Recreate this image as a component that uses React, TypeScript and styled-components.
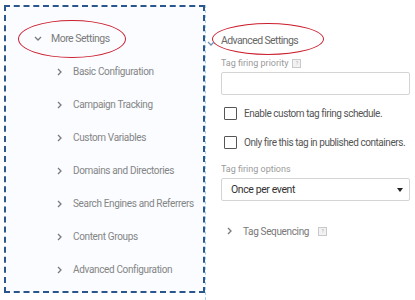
import React from 'react';
import styled, { createGlobalStyle } from 'styled-components';

const GlobalStyle = createGlobalStyle`
  html, body {
    margin: 0;
    padding: 0;
    background: #ffffff;
    font-family: Roboto, "Liberation Sans", Arial, sans-serif;
  }
`;

const moreSettings = [
  'Basic Configuration',
  'Campaign Tracking',
  'Custom Variables',
  'Domains and Directories',
  'Search Engines and Referrers',
  'Content Groups',
  'Advanced Configuration',
];

const Page = styled.div`
  display: flex;
  width: 415px;
  height: 300px;
  padding: 5px 0 0 4px;
  box-sizing: border-box;
  overflow: hidden;
  white-space: nowrap;
`;

const LeftPanel = styled.div`
  flex: none;
  width: 201px;
  height: 288px;
  box-sizing: border-box;
  border: 2px dashed #2c578c;
  background: #fafcff;
  padding-top: 15px;
  display: flex;
  flex-direction: column;
`;

const Row = styled.div<{ indent: number }>`
  position: relative;
  height: 33px;
  display: flex;
  align-items: center;
  padding-left: ${p => p.indent}px;
`;

const Chevron = styled.span`
  flex: none;
  width: 16px;
  display: flex;
  align-items: center;
  color: #7a7a7a;
  svg {
    display: block;
  }
`;

const HeaderText = styled.span`
  font-size: 10.5px;
  letter-spacing: -0.5px;
  color: #7b7b7b;
  margin-left: 1px;
`;

const ItemText = styled.span`
  font-size: 10px;
  letter-spacing: -0.35px;
  color: #858585;
`;

const Ellipse = styled.div<{ left: number; top: number; w: number; h: number }>`
  position: absolute;
  left: ${p => p.left}px;
  top: ${p => p.top}px;
  width: ${p => p.w}px;
  height: ${p => p.h}px;
  border: 1.6px solid #cc1f2d;
  border-radius: 50%;
  box-sizing: border-box;
  pointer-events: none;
`;

const RightPanel = styled.div`
  flex: none;
  width: 210px;
  box-sizing: border-box;
  border-left: 1px dashed #a9d3ee;
  padding: 20px 5px 0 15px;
  display: flex;
  flex-direction: column;
`;

const SectionHead = styled.div`
  position: relative;
  height: 30px;
  display: flex;
  align-items: center;
  font-size: 10.5px;
  letter-spacing: -0.6px;
  color: #676767;
`;

const HeadChevron = styled.span`
  position: absolute;
  left: -14px;
  top: 11px;
  color: #6f8fb0;
`;

const Label = styled.div<{ top: number }>`
  display: flex;
  align-items: center;
  gap: 4px;
  font-size: 9px;
  color: #9a9a9a;
  height: 14px;
  margin-top: ${p => p.top}px;
`;

const Help = styled.span<{ gap?: number }>`
  display: inline-flex;
  align-items: center;
  justify-content: center;
  width: 7px;
  height: 7px;
  margin-left: ${p => p.gap ?? 0}px;
  border: 1px solid #c9c9c9;
  background: #f2f2f2;
  font-size: 5px;
  color: #aaa;
  line-height: 1;
  letter-spacing: 0;
`;

const Field = styled.div`
  height: 23px;
  box-sizing: border-box;
  border: 1px solid #d4d4d4;
  border-radius: 2px;
  margin-top: 2px;
  display: flex;
  align-items: center;
  justify-content: space-between;
  padding: 0 6px 0 9px;
  font-size: 10.5px;
  letter-spacing: -0.4px;
  color: #333;
`;

const CheckList = styled.div`
  display: flex;
  flex-direction: column;
  padding-top: 4px;
`;

const CheckRow = styled.label`
  display: flex;
  align-items: center;
  height: 29px;
  padding-left: 3px;
  font-size: 10px;
  letter-spacing: -0.45px;
  color: #555;
`;

const Box = styled.span`
  flex: none;
  width: 11px;
  height: 11px;
  border: 1.5px solid #555;
  border-radius: 1px;
  margin-right: 7px;
`;

const SeqRow = styled.div`
  display: flex;
  align-items: center;
  height: 24px;
  margin-top: 18px;
  padding-left: 6px;
  font-size: 10px;
  letter-spacing: -0.35px;
  color: #777;
`;

const Caret = () => (
  <svg width="6" height="4" viewBox="0 0 6 4">
    <path d="M0 0 L6 0 L3 4 Z" fill="#222" />
  </svg>
);

const Right = () => (
  <svg width="5" height="8" viewBox="0 0 5 8">
    <path d="M1 1 L4 4 L1 7" fill="none" stroke="currentColor" strokeWidth="1.3" />
  </svg>
);

const Down = () => (
  <svg width="8" height="5" viewBox="0 0 8 5">
    <path d="M1 1 L4 4 L7 1" fill="none" stroke="currentColor" strokeWidth="1.3" />
  </svg>
);

const App = () => {
  return (
    <>
      <GlobalStyle />
      <Page>
        <LeftPanel>
          <Row indent={28}>
            <Ellipse left={12} top={-2} w={108} h={38} />
            <Chevron><Down /></Chevron>
            <HeaderText>More Settings</HeaderText>
          </Row>
          {moreSettings.map(item => (
            <Row key={item} indent={51}>
              <Chevron><Right /></Chevron>
              <ItemText>{item}</ItemText>
            </Row>
          ))}
        </LeftPanel>
        <RightPanel>
          <SectionHead>
            <Ellipse left={-9} top={-2} w={112} h={32} />
            <HeadChevron><Down /></HeadChevron>
            Advanced Settings
          </SectionHead>
          <Label top={1}>
            Tag firing priority <Help>?</Help>
          </Label>
          <Field />
          <CheckList>
            <CheckRow>
              <Box />
              Enable custom tag firing schedule.
            </CheckRow>
            <CheckRow>
              <Box />
              Only fire this tag in published containers.
            </CheckRow>
          </CheckList>
          <Label top={5}>Tag firing options</Label>
          <Field>
            Once per event
            <Caret />
          </Field>
          <SeqRow>
            <Chevron><Right /></Chevron>
            Tag Sequencing
            <Help gap={9}>?</Help>
          </SeqRow>
        </RightPanel>
      </Page>
    </>
  );
};

export default App;
